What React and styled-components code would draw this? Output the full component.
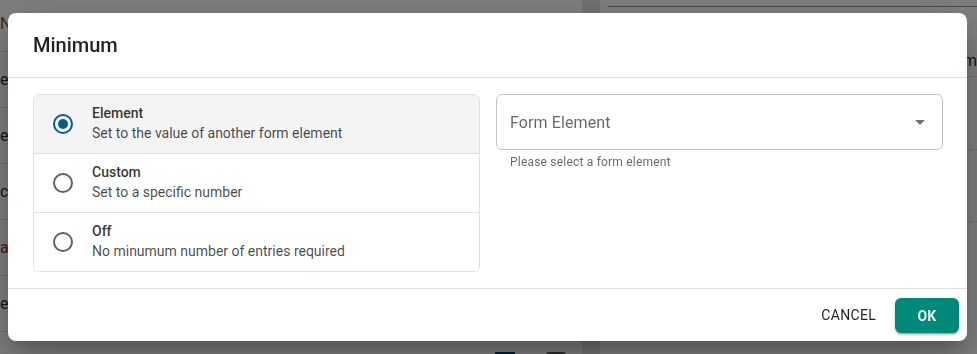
import React, { useState } from "react";
import styled, { createGlobalStyle } from "styled-components";

const GlobalStyle = createGlobalStyle`
  * { box-sizing: border-box; }
  html, body {
    margin: 0;
    padding: 0;
    height: 100%;
    overflow: hidden;
    font-family: Roboto, "Liberation Sans", Arial, sans-serif;
    color: rgba(0, 0, 0, 0.87);
    background: #fff;
  }
`;

/* ---------- page underneath the dialog ---------- */

const Page = styled.div`
  display: flex;
  height: 100vh;
  background: #fff;
`;

const LeftPanel = styled.div`
  width: 582px;
  flex-shrink: 0;
  overflow: hidden;
`;

const FieldList = styled.ul`
  list-style: none;
  margin: -4px 0 0;
  padding: 0;
`;

const FieldRow = styled.li`
  height: 56px;
  display: flex;
  align-items: center;
  gap: 31px;
  border-bottom: 1px solid #e0e0e0;
  font-size: 16px;
  color: ${(p) => p.$color || "rgba(0,0,0,0.87)"};
  padding-right: 16px;
`;

const RowLabel = styled.span`
  flex: 1;
  white-space: nowrap;
`;

const RowIcon = styled.span`
  width: 20px;
  height: 16px;
  border: 2px solid #555;
  border-radius: 3px;
`;

const ListIcon = styled.span`
  width: 20px;
  height: 16px;
  border-top: 3px solid #0b3a5e;
  border-radius: 1px;
`;

const Gutter = styled.div`
  width: 18px;
  flex-shrink: 0;
  background: #e6e6e6;
`;

const RightPanel = styled.div`
  flex: 1;
  padding: 0 0 0 8px;
  overflow: hidden;
`;

const Underline = styled.div`
  height: 7px;
  border-bottom: 1px solid rgba(0, 0, 0, 0.42);
`;

const RightRow = styled.div`
  height: ${(p) => p.$h}px;
  display: flex;
  align-items: flex-end;
  justify-content: flex-end;
  padding-bottom: 6px;
  border-bottom: 1px solid #e0e0e0;
  font-size: 16px;
  white-space: nowrap;
`;

/* ---------- dialog ---------- */

const Backdrop = styled.div`
  position: fixed;
  inset: 0;
  padding-right: 2px;
  background: rgba(0, 0, 0, 0.5);
  display: flex;
  align-items: center;
  justify-content: center;
`;

const Dialog = styled.div`
  width: 959px;
  background: #fff;
  border-radius: 8px;
  box-shadow: 0 11px 15px -7px rgba(0, 0, 0, 0.2),
    0 24px 38px 3px rgba(0, 0, 0, 0.14), 0 9px 46px 8px rgba(0, 0, 0, 0.12);
  display: flex;
  flex-direction: column;
`;

const Title = styled.h2`
  margin: 0;
  padding: 16px 25px;
  font-size: 20px;
  font-weight: 500;
  line-height: 32px;
  color: rgba(0, 0, 0, 0.87);
  border-bottom: 1px solid #e0e0e0;
`;

const Content = styled.div`
  display: grid;
  grid-template-columns: 447px 447px;
  gap: 16px;
  padding: 16px 24px 16px 25px;
  align-items: start;
  border-bottom: 1px solid #e0e0e0;
`;

const OptionList = styled.div`
  border: 1px solid #e0e0e0;
  border-radius: 6px;
  overflow: hidden;
`;

const Option = styled.label`
  display: flex;
  align-items: center;
  gap: 19px;
  height: ${(p) => (p.$last ? 58 : 59)}px;
  padding-left: 19px;
  background: ${(p) => (p.$selected ? "#f4f4f4" : "#fff")};
  border-bottom: ${(p) => (p.$last ? "none" : "1px solid #e0e0e0")};
  cursor: pointer;
`;

const RadioCircle = styled.span`
  width: 20px;
  height: 20px;
  border-radius: 50%;
  border: 2px solid ${(p) => (p.$checked ? "#0b5a8e" : "#616161")};
  display: flex;
  align-items: center;
  justify-content: center;
  flex-shrink: 0;

  &::after {
    content: "";
    width: 10px;
    height: 10px;
    border-radius: 50%;
    background: #0b5a8e;
    display: ${(p) => (p.$checked ? "block" : "none")};
  }
`;

const OptionText = styled.div`
  display: flex;
  flex-direction: column;
  font-size: 14px;
  line-height: 20px;
  margin-top: -2px;
`;

const OptionTitle = styled.span`
  font-weight: 500;
  color: rgba(0, 0, 0, 0.8);
`;

const OptionDesc = styled.span`
  color: rgba(0, 0, 0, 0.72);
`;

const SelectField = styled.div`
  display: flex;
  flex-direction: column;
`;

const SelectBox = styled.div`
  position: relative;
  height: 56px;
  border: 1px solid #c4c4c4;
  border-radius: 6px;
  display: flex;
  align-items: center;
  padding: 0 14px 0 13px;
`;

const Placeholder = styled.span`
  font-size: 16px;
  color: rgba(0, 0, 0, 0.6);
  letter-spacing: 0.1px;
`;

const ArrowIcon = styled.svg`
  position: absolute;
  right: 10px;
  top: 15px;
  width: 24px;
  height: 24px;
  fill: rgba(0, 0, 0, 0.54);
`;

const Helper = styled.p`
  margin: 2px 14px 0;
  font-size: 12px;
  line-height: 20px;
  letter-spacing: 0.2px;
  color: rgba(0, 0, 0, 0.6);
`;

const Footer = styled.div`
  display: flex;
  justify-content: flex-end;
  align-items: center;
  gap: 11px;
  padding: 8px;
  height: 52px;
`;

const TextButton = styled.button`
  background: none;
  border: none;
  height: 36px;
  min-width: 64px;
  padding: 6px 8px;
  font-family: inherit;
  font-size: 14px;
  font-weight: 400;
  letter-spacing: 0.3px;
  text-transform: uppercase;
  color: rgba(0, 0, 0, 0.87);
  cursor: pointer;
`;

const PrimaryButton = styled(TextButton)`
  width: 64px;
  height: 35px;
  margin-top: 1px;
  background: #00897a;
  color: #e6f4f1;
  font-weight: 700;
  border-radius: 6px;
  box-shadow: 0 3px 1px -2px rgba(0, 0, 0, 0.2), 0 2px 2px 0 rgba(0, 0, 0, 0.14),
    0 1px 5px 0 rgba(0, 0, 0, 0.12);
`;

const options = [
  { id: "element", title: "Element", desc: "Set to the value of another form element" },
  { id: "custom", title: "Custom", desc: "Set to a specific number" },
  { id: "off", title: "Off", desc: "No minumum number of entries required" },
];

const bgRows = [
  { label: "Na", color: "#8a5310" },
  { label: "el" },
  { label: "el" },
  { label: "co" },
  { label: "ai", color: "#b3261e" },
  { label: "ee" },
  { label: "" },
];

function App() {
  const [value, setValue] = useState("element");

  return (
    <>
      <GlobalStyle />
      <Page>
        <LeftPanel>
          <FieldList>
            {bgRows.map((row, i) => (
              <FieldRow key={i} $color={row.color}>
                <RowLabel>{row.label}</RowLabel>
                {i === bgRows.length - 1 && (
                  <>
                    <ListIcon />
                    <RowIcon />
                  </>
                )}
              </FieldRow>
            ))}
          </FieldList>
        </LeftPanel>
        <Gutter />
        <RightPanel>
          <Underline />
          <RightRow $h={70}>m</RightRow>
          <RightRow $h={73} />
          <RightRow $h={72} />
        </RightPanel>
      </Page>

      <Backdrop>
        <Dialog role="dialog" aria-labelledby="min-title">
          <Title id="min-title">Minimum</Title>
          <Content>
            <OptionList>
              {options.map((opt, i) => (
                <Option
                  key={opt.id}
                  $selected={value === opt.id}
                  $last={i === options.length - 1}
                  onClick={() => setValue(opt.id)}
                >
                  <RadioCircle $checked={value === opt.id} />
                  <OptionText>
                    <OptionTitle>{opt.title}</OptionTitle>
                    <OptionDesc>{opt.desc}</OptionDesc>
                  </OptionText>
                </Option>
              ))}
            </OptionList>
            <SelectField>
              <SelectBox>
                <Placeholder>Form Element</Placeholder>
                <ArrowIcon viewBox="0 0 24 24">
                  <path d="M7 10l5 5 5-5z" />
                </ArrowIcon>
              </SelectBox>
              <Helper>Please select a form element</Helper>
            </SelectField>
          </Content>
          <Footer>
            <TextButton>Cancel</TextButton>
            <PrimaryButton>OK</PrimaryButton>
          </Footer>
        </Dialog>
      </Backdrop>
    </>
  );
}

export default App;
